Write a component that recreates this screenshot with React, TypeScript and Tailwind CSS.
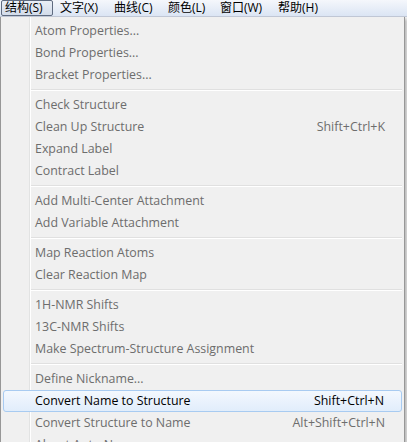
import React from 'react';

type Entry = { label: string; shortcut?: string; active?: boolean } | 'sep';

const entries: Entry[] = [
  { label: 'Atom Properties...' },
  { label: 'Bond Properties...' },
  { label: 'Bracket Properties...' },
  'sep',
  { label: 'Check Structure' },
  { label: 'Clean Up Structure', shortcut: 'Shift+Ctrl+K' },
  { label: 'Expand Label' },
  { label: 'Contract Label' },
  'sep',
  { label: 'Add Multi-Center Attachment' },
  { label: 'Add Variable Attachment' },
  'sep',
  { label: 'Map Reaction Atoms' },
  { label: 'Clear Reaction Map' },
  'sep',
  { label: '1H-NMR Shifts' },
  { label: '13C-NMR Shifts' },
  { label: 'Make Spectrum-Structure Assignment' },
  'sep',
  { label: 'Define Nickname...' },
  { label: 'Convert Name to Structure', shortcut: 'Shift+Ctrl+N', active: true },
  { label: 'Convert Structure to Name', shortcut: 'Alt+Shift+Ctrl+N' },
  { label: 'About Auto Name' },
];

const menus = [
  { label: '文字(X)', w: 'w-[54px]' },
  { label: '曲线(C)', w: 'w-[54px]' },
  { label: '颜色(L)', w: 'w-[52px]' },
  { label: '窗口(W)', w: 'w-[58px]' },
  { label: '帮助(H)', w: 'w-[50px]' },
];

const App: React.FC = () => {
  return (
    <div
      className="relative w-[407px] h-[442px] overflow-hidden bg-[#f4f4f4]"
      style={{ fontFamily: '"Open Sans", "Noto Sans CJK SC", sans-serif' }}
    >
      {/* Menu bar */}
      <div className="flex h-[17px] items-stretch bg-gradient-to-b from-[#f5f7fc] to-[#dbe5f4] border-b border-[#c3cad8] text-[12px] text-black">
        <div className="ml-[1px] w-[52px] flex items-center pl-[3px] border border-[#5f6b80] rounded-[2px] bg-gradient-to-b from-[#e9eef6] to-[#d3dcea] leading-none">
          结构(S)
        </div>
        <div className="w-[3px]" />
        {menus.map((m) => (
          <div key={m.label} className={`${m.w} flex items-center pl-[4px] leading-none`}>
            {m.label}
          </div>
        ))}
      </div>

      {/* Dropdown */}
      <div className="absolute top-[17px] left-0 w-[405px] h-[440px] bg-[#f0f0f0] border-l border-r border-[#979797] pt-[3px] shadow-[2px_2px_3px_rgba(0,0,0,0.25)]">
        <div className="absolute top-0 bottom-0 left-[28px] w-[2px] border-l border-[#e2e3e3] border-r border-r-white" />
        {entries.map((e, i) =>
          e === 'sep' ? (
            <div key={i} className="relative h-[8px] flex items-center pl-[30px] pr-[2px]">
              <div className="w-full h-[2px] border-t border-[#e0e0e0] border-b border-b-white" />
            </div>
          ) : (
            <div
              key={i}
              className={`relative h-[22px] flex items-center text-[12.4px] ${
                e.active
                  ? 'mx-[2px] pl-[31px] pr-[17px] rounded-[3px] border border-[#a8cbf1] bg-gradient-to-b from-[#f3f8fe] to-[#e1edfb] text-black'
                  : 'pl-[34px] pr-[19px] text-[#6d6d6d]'
              }`}
            >
              <span className="whitespace-nowrap">{e.label}</span>
              {e.shortcut && <span className="ml-auto whitespace-nowrap">{e.shortcut}</span>}
            </div>
          )
        )}
      </div>
    </div>
  );
};

export default App;
